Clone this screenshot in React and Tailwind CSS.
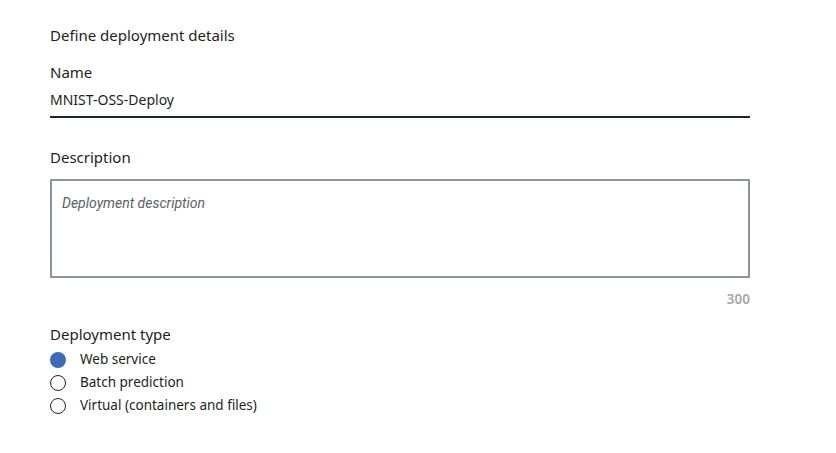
import { useState } from 'react';

const types = [
  'Web service',
  'Batch prediction',
  'Virtual (containers and files)',
];

function Radio({ checked }) {
  if (checked) {
    return <span className="block h-[16px] w-[16px] rounded-full bg-[#3d6cb5]" />;
  }
  return <span className="block h-[16px] w-[16px] rounded-full border-[1.5px] border-[#1f2328] bg-white" />;
}

export default function App() {
  const [type, setType] = useState('Web service');

  return (
    <div className="min-h-[453px] w-[836px] bg-white text-[#1b1f23]" style={{ fontFamily: '"Noto Sans", Arial, sans-serif' }}>
      <div className="w-[750px] pl-[50px] pt-[25px]">
        <h2 className="text-[15px] leading-[20px]">Define deployment details</h2>

        <label className="mt-[17px] block text-[15px] leading-[20px]">Name</label>
        <div className="mt-[9px] border-b-2 border-[#1c2731] pb-[7px] text-[14px] leading-[18px]">
          MNIST-OSS-Deploy
        </div>

        <label className="mt-[29px] block text-[15px] leading-[20px]">Description</label>
        <textarea
          className="mt-[12px] block h-[99px] w-full resize-none border-2 border-[#8a969f] px-[10px] py-[13px] text-[14px] leading-[18px] outline-none placeholder:italic placeholder:text-[#5a6168]"
          style={{ fontFamily: 'Roboto, "Noto Sans", sans-serif' }}
          placeholder="Deployment description"
        />
        <div className="mt-[13px] text-right text-[13.5px] font-semibold leading-[17px] text-[#a4a8ab]">300</div>

        <div className="mt-[16px] text-[15px] leading-[20px]">Deployment type</div>
        <div className="mt-[4px] flex flex-col">
          {types.map((t) => (
            <button
              key={t}
              onClick={() => setType(t)}
              className="flex h-[23px] items-center gap-[14px] text-left text-[13.5px]"
            >
              <span className="flex w-[16px] justify-center">
                <Radio checked={type === t} />
              </span>
              <span>{t}</span>
            </button>
          ))}
        </div>
      </div>
    </div>
  );
}
